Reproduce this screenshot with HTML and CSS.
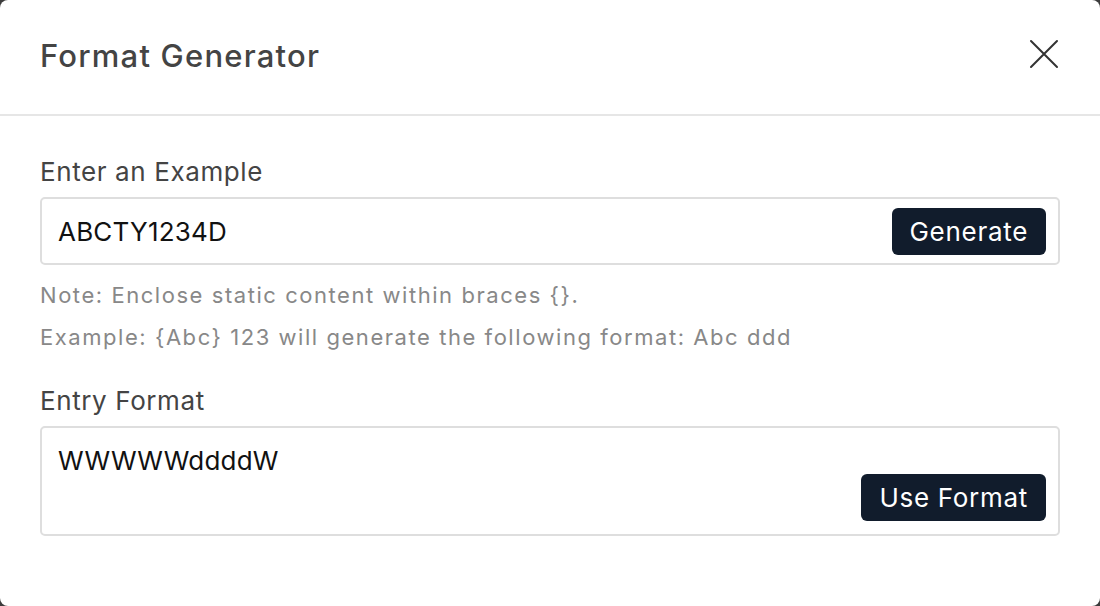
FILE: index.html
```html
<!DOCTYPE html>
<html lang="en">
<head>
    <meta charset="UTF-8">
    <meta name="viewport" content="width=device-width, initial-scale=1.0">
    <title>Format Generator</title>
    <link rel="stylesheet" href="styles.css">
</head>
<body>
<div class="modal">
    <header class="modal-header">
        <h2>Format Generator</h2>
        <button class="close" aria-label="Close">
            <svg width="30" height="30" viewBox="0 0 30 30">
                <path d="M2 2 L28 28 M28 2 L2 28" stroke="#333" stroke-width="2" stroke-linecap="round" fill="none"/>
            </svg>
        </button>
    </header>
    <div class="modal-body">
        <label class="field-label" for="example">Enter an Example</label>
        <div class="input-box">
            <span id="example" class="value">ABCTY1234D</span>
            <button class="btn">Generate</button>
        </div>
        <p class="note">Note: Enclose static content within braces {}.</p>
        <p class="note">Example: {Abc} 123 will generate the following format: Abc ddd</p>
        <label class="field-label format-label" for="format">Entry Format</label>
        <div class="input-box textarea-box">
            <span id="format" class="value">WWWWWddddW</span>
            <button class="btn">Use Format</button>
        </div>
    </div>
</div>
</body>
</html>
```

FILE: styles.css
```css
body {
    margin: 0;
    background: #3c3c3c;
    font-family: Inter, "Noto Sans", sans-serif;
}
.modal {
    height: 606px;
    box-sizing: border-box;
    background: white;
    border-radius: 8px;
}
.modal-header {
    display: flex;
    align-items: center;
    justify-content: space-between;
    height: 110px;
    padding: 0 41px 4px 40px;
    border-bottom: 2px solid #e6e6e6;
}
.modal-header h2 {
    margin: 0;
    font-size: 31px;
    font-weight: 500;
    letter-spacing: 1.2px;
    color: #444;
}
.close {
    background: none;
    border: none;
    padding: 0;
    margin-bottom: 3px;
    cursor: pointer;
    display: flex;
}
.modal-body {
    padding: 40px 40px 0;
}
.field-label {
    display: block;
    font-size: 26px;
    letter-spacing: 0.6px;
    color: #444;
    margin-bottom: 10px;
}
.format-label {
    margin-top: 35px;
}
.input-box {
    display: flex;
    align-items: center;
    justify-content: space-between;
    height: 68px;
    box-sizing: border-box;
    border: 2px solid #dedede;
    border-radius: 5px;
    padding: 0 12px 0 16px;
}
.value {
    font-size: 26px;
    letter-spacing: 0.2px;
    color: #111;
}
.textarea-box {
    height: 110px;
    align-items: flex-start;
    padding-top: 17px;
}
.textarea-box .btn {
    margin-top: 29px;
}
.btn {
    background: #111c2c;
    color: white;
    border: none;
    border-radius: 6px;
    height: 47px;
    padding: 0 18px;
    font-family: inherit;
    font-size: 26px;
    letter-spacing: 0.7px;
    cursor: pointer;
}
.note {
    margin: 17px 0 0;
    font-size: 22px;
    letter-spacing: 1.55px;
    color: #888;
}
.note + .note {
    margin-top: 16px;
}
```
